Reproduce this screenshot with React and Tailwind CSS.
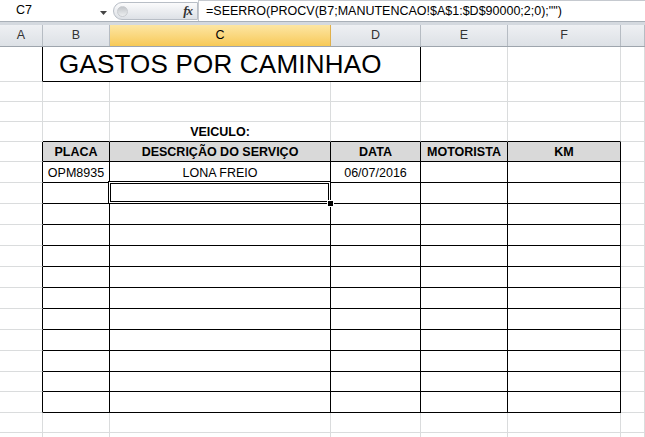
import React from 'react';

// Excel 2010 sheet: "GASTOS POR CAMINHAO"
const COLS = ['w-[43px]', 'w-[67px]', 'w-[221px]', 'w-[90px]', 'w-[87px]', 'w-[113px]', 'flex-1'];
const LETTERS = ['A', 'B', 'C', 'D', 'E', 'F', ''];

const HEADERS = ['PLACA', 'DESCRIÇÃO DO SERVIÇO', 'DATA', 'MOTORISTA', 'KM'];

// data rows 6..17
const DATA_HEIGHTS = ['h-[21px]', 'h-[21px]', 'h-[21px]', 'h-[21px]', 'h-[21px]', 'h-[21px]', 'h-[21px]', 'h-[21px]', 'h-[21px]', 'h-[21px]', 'h-[20px]', 'h-[21px]'];
const DATA = [['OPM8935', 'LONA FREIO', '06/07/2016', '', '']];

const font = { fontFamily: '"Liberation Sans", Arial, sans-serif' };

function Cell({ col, h, right, bottom, className = '', children }) {
  return (
    <div
      className={`${COLS[col]} ${h} shrink-0 border-r border-b ${right ? 'border-r-black' : 'border-r-[#dadcdd]'} ${bottom ? 'border-b-black' : 'border-b-[#dadcdd]'} ${className}`}
    >
      {children}
    </div>
  );
}

function FormulaBar() {
  return (
    <div className="flex h-[21px] bg-white">
      <div className="w-[113px] shrink-0 flex items-center relative">
        <span className="pl-[16px] text-[12.5px] text-black">C7</span>
        <svg className="absolute left-[100px] top-[11px]" width="8" height="4" viewBox="0 0 8 4">
          <path d="M0 0 L7 0 L3.5 4 Z" fill="#444" />
        </svg>
      </div>
      <div className="w-[85px] shrink-0 mt-[2px] h-[18px] rounded-l-full border border-[#b8bec6] bg-linear-to-b from-[#fbfbfc] to-[#dde1e6] flex items-center justify-between pl-[3px] pr-[5px]">
        <div className="w-[11px] h-[11px] rounded-full bg-linear-to-b from-[#c3c6ca] to-[#eceef0] border border-[#c9ccd0]" />
        <span className="italic font-bold text-[13px] text-[#333] tracking-[-1px]" style={{ fontFamily: '"Liberation Serif", serif' }}>fx</span>
      </div>
      <div className="flex-1 border-t border-l border-[#c5c9cf] flex items-center pl-[7px] text-[12.5px] text-black whitespace-nowrap">
        =SEERRO(PROCV(B7;MANUTENCAO!$A$1:$D$90000;2;0);"")
      </div>
    </div>
  );
}

function ColumnHeader() {
  return (
    <div className="flex h-[22px] border-b border-[#9ea5ad]">
      {LETTERS.map((l, i) => (
        <div
          key={i}
          className={`${COLS[i]} shrink-0 flex items-center justify-center text-[12.5px] border-r ${i === 2 ? 'bg-linear-to-b from-[#fde6a2] to-[#f7c955] border-r-[#e0b04a] text-black' : 'bg-linear-to-b from-[#eef0f3] to-[#dde1e6] border-r-[#b6bcc3] text-[#333]'}`}
        >
          {l}
        </div>
      ))}
    </div>
  );
}

export default function App() {
  return (
    <div className="w-[645px] h-[437px] overflow-hidden bg-white" style={font}>
      <FormulaBar />
      <div className="h-[4px] bg-[#d4d9df] border-t border-[#a9b0b8]" />
      <ColumnHeader />

      {/* row 1: title merged B1:D1 */}
      <div className="flex">
        <Cell col={0} h="h-[35px]" right />
        <div className="w-[378px] h-[35px] shrink-0 border-r border-b border-black flex items-end pl-[16px] pb-[2px]">
          <span className="text-[26px] leading-[30px] text-black tracking-[0.2px]">GASTOS POR CAMINHAO</span>
        </div>
        <Cell col={4} h="h-[35px]" />
        <Cell col={5} h="h-[35px]" />
        <Cell col={6} h="h-[35px]" />
      </div>

      {/* rows 2-3 */}
      {[0, 1].map((r) => (
        <div className="flex" key={r}>
          {COLS.map((_, c) => (
            <Cell key={c} col={c} h="h-[20px]" />
          ))}
        </div>
      ))}

      {/* row 4: VEICULO */}
      <div className="flex">
        {COLS.map((_, c) => (
          <Cell key={c} col={c} h="h-[20px]" bottom={c >= 1 && c <= 5} className="flex items-end justify-center pb-px">
            {c === 2 && <span className="text-[12.5px] font-bold text-black leading-[15px]">VEICULO:</span>}
          </Cell>
        ))}
      </div>

      {/* row 5: table header */}
      <div className="flex">
        {COLS.map((_, c) => (
          <Cell
            key={c}
            col={c}
            h="h-[20px]"
            right={c <= 5}
            bottom={c >= 1 && c <= 5}
            className={`flex items-end justify-center pb-px ${c >= 1 && c <= 5 ? 'bg-[#d9d9d9]' : ''}`}
          >
            {c >= 1 && c <= 5 && (
              <span className="text-[12.5px] font-bold text-black leading-[15px] whitespace-nowrap">{HEADERS[c - 1]}</span>
            )}
          </Cell>
        ))}
      </div>

      {/* rows 6-17: data */}
      {DATA_HEIGHTS.map((h, r) => (
        <div className="flex" key={r}>
          {COLS.map((_, c) => (
            <Cell
              key={c}
              col={c}
              h={h}
              right={c <= 5}
              bottom={c >= 1 && c <= 5}
              className="relative flex items-end justify-center pb-px"
            >
              {c >= 1 && c <= 5 && DATA[r] && (
                <span className="text-[12.5px] text-black leading-[15px] whitespace-nowrap">{DATA[r][c - 1]}</span>
              )}
              {r === 1 && c === 2 && (
                <>
                  <div className="absolute -left-[2px] -top-[2px] -right-px -bottom-px z-10 border border-black">
                    <div className="w-full h-full border border-white">
                      <div className="w-full h-full border border-black" />
                    </div>
                  </div>
                  <div className="absolute -right-[4px] -bottom-[4px] z-20 w-[7px] h-[7px] bg-black border border-white" />
                </>
              )}
            </Cell>
          ))}
        </div>
      ))}

      {/* rows 18-19 */}
      {['h-[20px]', 'h-[20px]'].map((h, r) => (
        <div className="flex" key={r}>
          {COLS.map((_, c) => (
            <Cell key={c} col={c} h={h} />
          ))}
        </div>
      ))}
    </div>
  );
}
